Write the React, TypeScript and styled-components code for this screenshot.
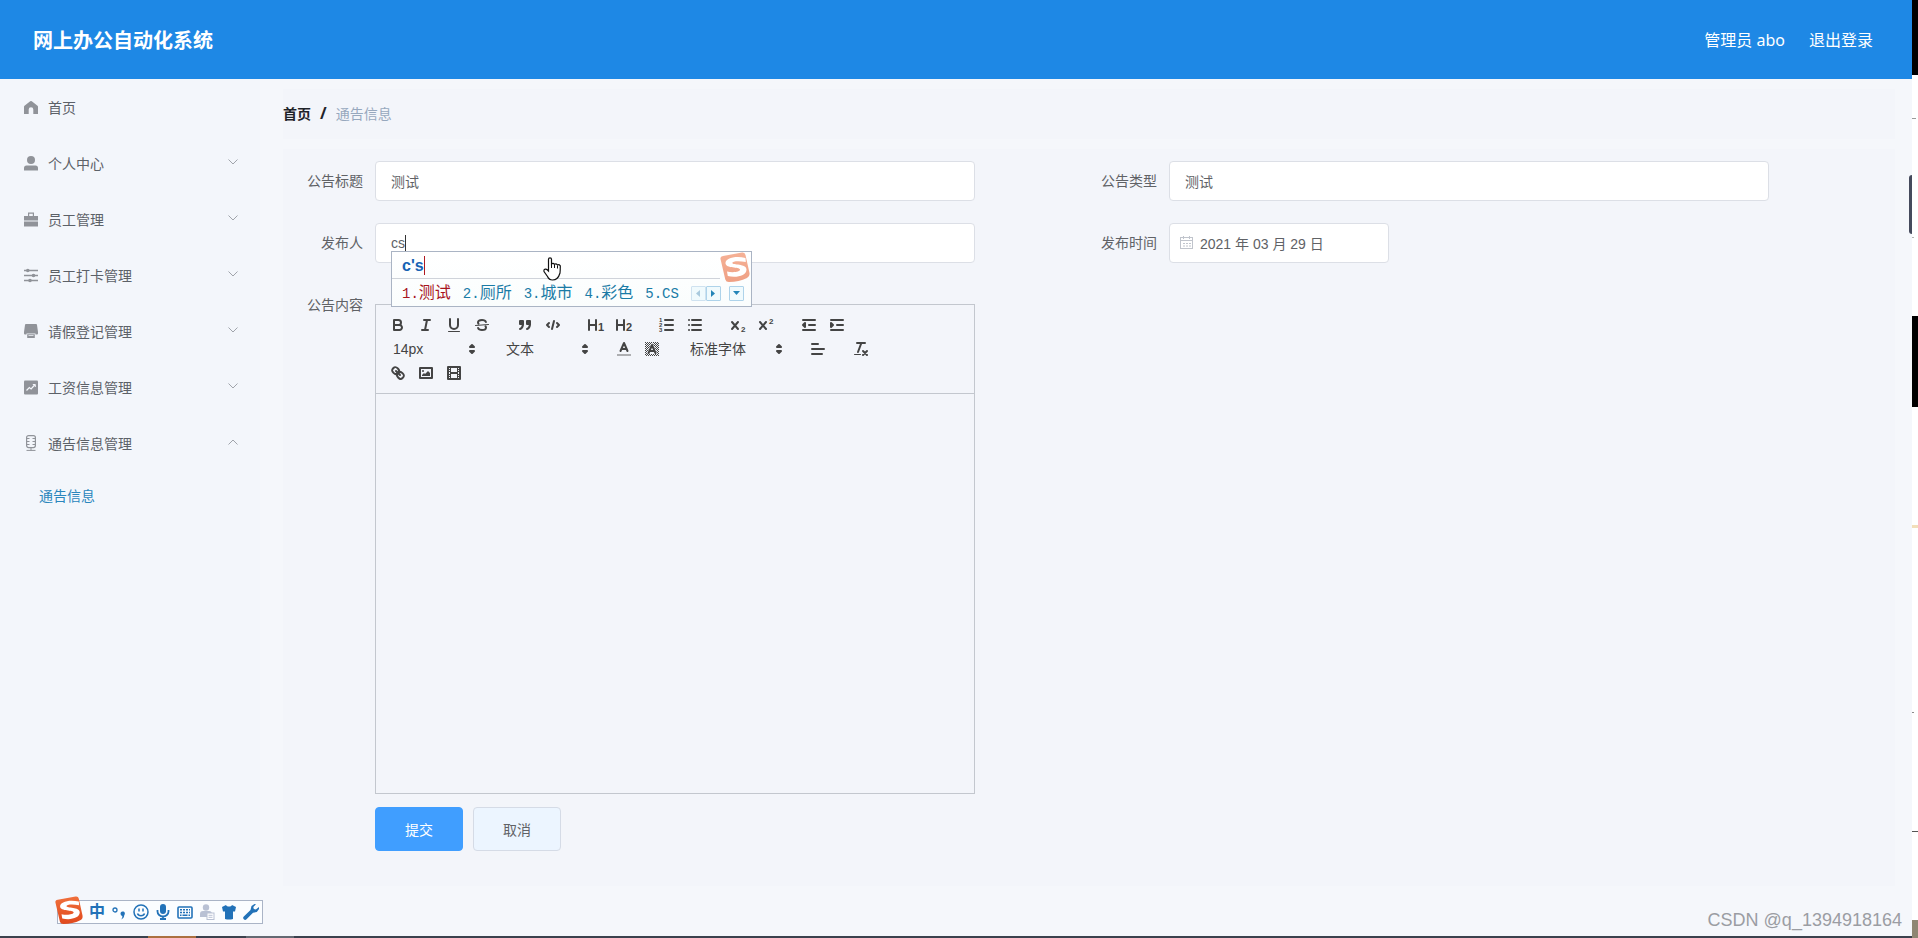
import React from "react";
import styled, { createGlobalStyle } from "styled-components";

const sans = '"Liberation Sans", "Noto Sans CJK SC", sans-serif';
const cjk = '"Noto Sans", "Noto Sans CJK SC", sans-serif';

const GlobalStyle = createGlobalStyle`
  *, *::before, *::after { box-sizing: border-box; }
  body { margin: 0; background: #fff; font-family: ${sans}; font-size: 14px; color: #606266; }
  button, input, select, textarea { font: inherit; color: inherit; margin: 0; }
  a { color: inherit; text-decoration: none; }
  svg { display: block; flex: none; }
`;

/* ---------- frame ---------- */

const Screen = styled.div`
  display: flex;
  min-height: 100vh;
  overflow: hidden;
`;

const Desktop = styled.div`
  position: relative;
  flex: 1;
  min-width: 0;
  display: flex;
  flex-direction: column;
  background: #f5f7fb;
`;

const EdgeStrip = styled.div`
  flex: none;
  width: 6px;
  display: flex;
  flex-direction: column;
`;

const EdgePiece = styled.div<{ $h: number; $color: string; $w?: number }>`
  flex: none;
  width: ${(p) => p.$w ?? 6}px;
  height: ${(p) => p.$h}px;
  background: ${(p) => p.$color};
`;

const EdgeRest = styled.div`
  flex: 1;
  background: #8f8672;
`;

const TaskBar = styled.div`
  display: flex;
  height: 2px;
  background: #3b414d;
`;

const TaskPiece = styled.div<{ $w: number; $color: string }>`
  width: ${(p) => p.$w}px;
  background: ${(p) => p.$color};
`;

const SideHandle = styled.div`
  position: absolute;
  right: 0;
  top: 175px;
  width: 3px;
  height: 59px;
  border-radius: 3px 0 0 3px;
  background: #454a5c;
`;

/* ---------- header ---------- */

const Header = styled.header`
  display: flex;
  align-items: center;
  justify-content: space-between;
  height: 79px;
  padding: 0 39px 0 33px;
  background: #1e88e5;
  color: #fff;
  font-family: ${cjk};
`;

const SystemTitle = styled.h1`
  margin: 0;
  padding-top: 2px;
  font-size: 20px;
  line-height: 28px;
  font-weight: 700;
`;

const UserArea = styled.div`
  display: flex;
  gap: 24px;
  font-size: 16px;
  line-height: 24px;
`;

/* ---------- side menu ---------- */

const Body = styled.div`
  flex: 1;
  display: flex;
`;

const SideMenu = styled.nav`
  flex: none;
  width: 260px;
  background: #f3f6fb;
`;

const MenuItem = styled.button`
  display: flex;
  align-items: center;
  width: 100%;
  height: 56px;
  padding: 0 21px 0 24px;
  border: 0;
  background: none;
  text-align: left;
  color: #5c6168;
`;

const MenuIcon = styled.svg`
  width: 14px;
  height: 16px;
  margin-right: 10px;
  color: #909399;
`;

const MenuText = styled.span`
  flex: 1;
`;

const Chevron = styled.svg`
  width: 12px;
  height: 12px;
  margin-bottom: 2px;
  color: #a0a4ab;
`;

const SubItem = styled.a`
  display: block;
  padding-left: 39px;
  line-height: 50px;
  color: #2a86bd;
`;

/* ---------- content ---------- */

const Main = styled.main`
  flex: 1;
  min-width: 0;
  padding: 10px 17px 50px 23px;
`;

const Breadcrumb = styled.nav`
  display: flex;
  align-items: center;
  height: 50px;
  margin-bottom: 10px;
  padding-bottom: 2px;
  background: #f3f5fa;
  color: #97a8be;
`;

const CrumbHome = styled.a`
  font-weight: 700;
  color: #1f2329;
`;

const CrumbSlash = styled.span`
  margin: 0 9px;
  font-family: ${cjk};
  font-size: 16px;
  font-weight: 700;
  line-height: 20px;
  color: #1f2329;
`;

const FormPanel = styled.form`
  padding: 12px 12px 35px;
  background: #f3f5fa;
`;

const FieldGrid = styled.div`
  display: grid;
  grid-template-columns: 1fr 1fr;
  row-gap: 22px;
`;

const Field = styled.div`
  display: flex;
`;

const Label = styled.label`
  flex: none;
  width: 80px;
  padding-right: 12px;
  line-height: 40px;
  text-align: right;
`;

const Control = styled.div<{ $max?: number }>`
  position: relative;
  flex: 1;
  max-width: ${(p) => p.$max ?? 600}px;
`;

const TextInput = styled.input<{ $icon?: boolean }>`
  display: block;
  width: 100%;
  height: 40px;
  padding: 0 15px 0 ${(p) => (p.$icon ? 30 : 15)}px;
  border: 1px solid #dcdfe6;
  border-radius: 4px;
  background: #fff;
  outline: none;
`;

const DateIcon = styled.svg`
  position: absolute;
  left: 11px;
  top: 13px;
  width: 14px;
  height: 14px;
  color: #c0c4cc;
`;

const Caret = styled.span<{ $color: string; $left: number; $top: number; $h: number }>`
  position: absolute;
  left: ${(p) => p.$left}px;
  top: ${(p) => p.$top}px;
  width: 1px;
  height: ${(p) => p.$h}px;
  background: ${(p) => p.$color};
`;

/* ---------- rich text editor ---------- */

const Editor = styled.div`
  flex: 1;
  max-width: 600px;
  margin-top: 19px;
  border: 1px solid #c3c7ce;
`;

const Toolbar = styled.div`
  padding: 8px;
  border-bottom: 1px solid #c3c7ce;
  color: #444;
`;

const ToolRow = styled.div`
  display: flex;
  gap: 15px;
  height: 24px;
`;

const ToolGroup = styled.div`
  display: flex;
`;

const ToolButton = styled.button`
  width: 28px;
  height: 24px;
  padding: 3px 5px;
  border: 0;
  background: none;
`;

const QuillSvg = styled.svg`
  width: 18px;
  height: 18px;
  fill: none;
  stroke: #444;
  stroke-width: 2;
  stroke-linecap: round;
  stroke-linejoin: round;

  .fill { fill: #444; stroke: none; }
  .both { fill: #444; }
  .thin { stroke-width: 1; }
  text { fill: #444; stroke: none; font-family: ${sans}; font-weight: 700; }
`;

const Picker = styled.div<{ $w: number }>`
  position: relative;
  width: ${(p) => p.$w}px;
  height: 24px;

  svg {
    position: absolute;
    right: 1px;
    top: 3px;
    pointer-events: none;
  }
`;

const PickerSelect = styled.select`
  appearance: none;
  width: 100%;
  height: 24px;
  padding: 0 0 0 9px;
  border: 0;
  background: none;
  line-height: 24px;
  color: #444;
`;

const EditorBody = styled.textarea`
  display: block;
  width: 100%;
  height: 399px;
  padding: 12px 15px;
  border: 0;
  background: none;
  resize: none;
  outline: none;
`;

const Actions = styled.div`
  display: flex;
  gap: 10px;
  padding: 13px 0 0 80px;
`;

const ActionButton = styled.button<{ $primary?: boolean }>`
  width: 88px;
  height: 44px;
  border: 1px solid ${(p) => (p.$primary ? "#409eff" : "#d5dbe6")};
  border-radius: 4px;
  background: ${(p) => (p.$primary ? "#409eff" : "#ecf5ff")};
  color: ${(p) => (p.$primary ? "#fff" : "#606266")};
`;

/* ---------- input method ---------- */

const ImePopup = styled.div`
  position: absolute;
  z-index: 2;
  left: 16px;
  top: 28px;
  width: 361px;
  height: 56px;
  border: 1px solid #aab4c4;
  background: linear-gradient(#fff, #fafdfd);
`;

const ImeTyped = styled.div`
  height: 27px;
  margin-right: 31px;
  padding-left: 10px;
  border-bottom: 1px solid #cfd3da;
  font-size: 16px;
  line-height: 28px;
  font-weight: 700;
  color: #1763b4;
`;

const ImeLogo = styled.svg`
  position: absolute;
  right: 0;
  top: 0;
  width: 32px;
  height: 31px;
`;

const ImeRow = styled.div`
  display: flex;
  align-items: center;
  height: 27px;
  padding: 1px 0 0 10px;
`;

const Candidates = styled.ol`
  display: flex;
  gap: 12px;
  margin: 0;
  padding: 0;
  list-style: none;
  font-size: 16px;
  line-height: 24px;
  color: #1a7ba6;
  white-space: nowrap;

  li:first-child { color: #a8141c; }
`;

const Mono = styled.span`
  font-family: "Liberation Mono", monospace;
  font-size: 14px;
`;

const Pager = styled.div`
  display: flex;
  margin-left: 12px;
`;

const PagerButton = styled.button<{ $gap?: boolean; $dim?: boolean }>`
  display: flex;
  align-items: center;
  justify-content: center;
  width: 15px;
  height: 15px;
  margin-left: ${(p) => (p.$gap ? 8 : 0)}px;
  padding: 0;
  border: 1px solid ${(p) => (p.$dim ? "#cfe2f0" : "#aed3ea")};
  border-radius: 1px;
  background: #f0fafd;
  color: ${(p) => (p.$dim ? "#a9c9dd" : "#2385b8")};
`;

const HandCursor = styled.svg`
  position: absolute;
  left: 151px;
  top: 5px;
  width: 20px;
  height: 25px;
`;

const ImeBar = styled.div`
  position: absolute;
  z-index: 3;
  left: 57px;
  bottom: 14px;
  display: flex;
  align-items: center;
  width: 206px;
  height: 24px;
  padding-left: 28px;
  border: 1px solid #aab4c6;
  background: #fbfdff;
`;

const ImeBarLogo = styled.svg`
  position: absolute;
  left: -4px;
  bottom: -2px;
  width: 30px;
  height: 29px;
`;

const ImeBarButton = styled.button`
  display: flex;
  align-items: center;
  justify-content: center;
  width: 22px;
  height: 22px;
  padding: 0;
  border: 0;
  background: none;
  font-size: 16px;
  line-height: 20px;
  font-weight: 700;
  color: #2272b8;
`;

const Watermark = styled.div`
  position: absolute;
  z-index: 3;
  right: 10px;
  bottom: 8px;
  font-size: 18px;
  line-height: 20px;
  color: #9b9da3;
`;

/* ---------- drawings ---------- */

const SogouMark = ({ from, to }: { from: string; to: string }) => {
  const id = "sg" + from.slice(1);
  return (
    <>
      <defs>
        <linearGradient id={id} x1="0" y1="0" x2="0" y2="1">
          <stop offset="0" stopColor={from} />
          <stop offset="1" stopColor={to} />
        </linearGradient>
      </defs>
      <path d="M1.500 7 Q1 4.500 4 4 L23 .500 Q26 0 26.500 3 L30.500 21 Q31 24.500 28 26 Q20 30 10 30 Q7 30 6.300 27.500Z" fill={`url(#${id})`} />
      <path
        d="M26.500 6 C16 3.500 6 6.500 6.500 11.500 C7 16.500 20.500 14.800 21 17.500 C21.200 20 14 20.800 8 19.600 L8.800 24 C17 26 27.500 24 27.500 17.500 C27.500 11.500 13.500 13.200 13.300 11 C13.200 9 20 8.600 26.800 10Z"
        fill="#fff"
      />
    </>
  );
};

const menuDrawings: Record<string, React.ReactNode> = {
  home: <path fill="currentColor" d="M6.200 2.200q.800-.600 1.600 0L13.500 6.800q.500.400.500 1V15H9.300V10.500a2.300 2.300 0 0 0-4.600 0V15H0V7.800q0-.600.500-1Z" />,
  user: (
    <g fill="currentColor">
      <circle cx="7" cy="5" r="4" />
      <path d="M0 15.500v-2.500A2.500 2.500 0 0 1 2.500 10.500h9a2.500 2.500 0 0 1 2.500 2.500v2.500Z" />
    </g>
  ),
  briefcase: (
    <g fill="currentColor">
      <path d="M4 1.500h6V5h4v4.500H0V5h4Zm1.200 1.200V5h3.600V2.700Z" fillRule="evenodd" />
      <path d="M0 10.500h14v5H0Z" />
    </g>
  ),
  sliders: (
    <g fill="none" stroke="currentColor" strokeWidth="1.300">
      <path d="M0 3.500h14M0 8.500h14M0 13.500h14" />
      <g fill="currentColor" stroke="none">
        <circle cx="3.800" cy="3.500" r="1.800" />
        <circle cx="9.500" cy="8.500" r="1.800" />
        <circle cx="6" cy="13.500" r="1.800" />
      </g>
    </g>
  ),
  printer: (
    <g fill="currentColor">
      <path d="M2 1h10a1 1 0 0 1 1 1l1 7v1.500a1 1 0 0 1-1 1h-1.500V10.500h-9v1H1a1 1 0 0 1-1-1V9l1-7a1 1 0 0 1 1-1Z" />
      <path d="M3.200 11.200h7.600V15H3.200Zm1.300 1V13h5v-.800Z" fillRule="evenodd" />
    </g>
  ),
  chart: (
    <>
      <rect x="0" y="1.500" width="14" height="14" rx="1" fill="currentColor" />
      <path d="m2.500 11.500 2.800-3 1.800 1.500 4-4.500" fill="none" stroke="#f3f6fb" strokeWidth="1.200" />
      <path d="M8.800 5.500h2.500V8" fill="none" stroke="#f3f6fb" />
    </>
  ),
  mic: (
    <g fill="none" stroke="currentColor" strokeWidth="1.200">
      <rect x="2.600" y=".600" width="8.800" height="12" rx="2" />
      <path d="M3 3.500h2.500M3 6.500h2.500M3 9.500h2.500M11 3.500H8.500M11 6.500H8.500M11 9.500H8.500M7 12.600V15.400M2.500 15.400h9" strokeWidth="1" />
    </g>
  ),
};

const tools: Record<string, React.ReactNode> = {
  加粗: (
    <>
      <path d="M5,4H9.500A2.500,2.500,0,0,1,12,6.500v0A2.500,2.500,0,0,1,9.500,9H5V4Z" />
      <path d="M5,9h5.500A2.500,2.500,0,0,1,13,11.500v0A2.500,2.500,0,0,1,10.500,14H5V9Z" />
    </>
  ),
  斜体: <path d="M7 4h6M5 14h6M8 14 10 4" />,
  下划线: (
    <>
      <path d="M5,3V9a4.012,4.012,0,0,0,4,4H9a4.012,4.012,0,0,0,4-4V3" />
      <rect className="fill" x="3" y="15" width="12" height="1" rx=".5" />
    </>
  ),
  删除线: (
    <>
      <path className="thin" d="M15.500 8.500 2.500 9.500" />
      <path d="M12.900 6C12.500 4.800 10.900 4 9 4 6.700 4 5 5.100 5 6.500c0 .600.200 1 .500 1.300M5.100 12C5.500 13.200 7.100 14 9 14c2.300 0 4-1.100 4-2.500 0-.600-.200-1-.500-1.300" />
    </>
  ),
  引用: (
    <>
      <rect className="both" x="4" y="5" width="3" height="3" />
      <rect className="both" x="11" y="5" width="3" height="3" />
      <path className="both" d="M7,8c0,4.031-3,5-3,5" />
      <path className="both" d="M14,8c0,4.031-3,5-3,5" />
    </>
  ),
  代码: (
    <>
      <path d="M5 7 3 9 5 11M13 7 15 9 13 11" />
      <path d="M10 5 8 13" />
    </>
  ),
  一级标题: (
    <>
      <path d="M2 4V14M9 4V14M2 9H9" />
      <text x="11" y="15" fontSize="11">1</text>
    </>
  ),
  二级标题: (
    <>
      <path d="M2 4V14M9 4V14M2 9H9" />
      <text x="11" y="15" fontSize="11">2</text>
    </>
  ),
  有序列表: (
    <>
      <path d="M7 4H15M7 9H15M7 14H15" />
      <text x="1" y="6" fontSize="6">1</text>
      <text x="1" y="11" fontSize="6">2</text>
      <text x="1" y="16" fontSize="6">3</text>
    </>
  ),
  无序列表: <path d="M6 4H15M6 9H15M6 14H15M3 4h.01M3 9h.01M3 14h.01" />,
  下标: (
    <>
      <path d="M3 6 9 13M9 6 3 13" />
      <text x="12" y="16" fontSize="8">2</text>
    </>
  ),
  上标: (
    <>
      <path d="M3 6 9 13M9 6 3 13" />
      <text x="12" y="8" fontSize="8">2</text>
    </>
  ),
  减少缩进: (
    <>
      <path d="M3 14H15M3 4H15M9 9H15" />
      <path className="both" d="M5 7V11L3 9Z" />
    </>
  ),
  增加缩进: (
    <>
      <path d="M3 14H15M3 4H15M9 9H15" />
      <path className="both" d="M3 7V11L5 9Z" />
    </>
  ),
  字体颜色: (
    <>
      <path d="M3 15H15" opacity=".4" strokeLinecap="square" />
      <path d="M5.500 11 9 3 12.500 11M6.380 9H11.630" />
    </>
  ),
  背景颜色: (
    <>
      <defs>
        <pattern id="dither" width="2" height="2" patternUnits="userSpaceOnUse">
          <path d="M0 0h1v1H0ZM1 1h1v1H1Z" fill="#444" stroke="none" />
        </pattern>
      </defs>
      <rect x="2" y="2" width="14" height="14" fill="url(#dither)" stroke="none" />
      <path d="M9 4 5 13h8Z" fill="#f3f5fa" stroke="#f3f5fa" />
      <path d="M5.500 13 9 5 12.500 13M6.380 11H11.630" />
    </>
  ),
  对齐方式: <path d="M3 9H15M3 14H13M3 4H9" />,
  清除格式: (
    <>
      <path d="M5 3H13M6 12 9.350 3M11 11 15 15M15 11 11 15" />
      <rect className="fill" x="2" y="14" width="7" height="1" rx=".5" />
    </>
  ),
  插入链接: (
    <>
      <path d="M7 7 11 11" />
      <path d="M8.900,4.577a3.476,3.476,0,0,1,.360,4.679A3.476,3.476,0,0,1,4.577,8.900C3.185,7.500,2.035,6.400,4.217,4.217S7.500,3.185,8.900,4.577Z" />
      <path d="M13.423,9.100a3.476,3.476,0,0,0-4.679-.360,3.476,3.476,0,0,0,.360,4.679c1.392,1.392,2.500,2.542,4.679.360S14.815,10.500,13.423,9.100Z" />
    </>
  ),
  插入图片: (
    <>
      <rect x="3" y="4" width="12" height="10" />
      <circle className="fill" cx="6" cy="7" r="1" />
      <path className="fill" d="M5 12V11L7 9 8 10 11 7 13 9V12Z" />
    </>
  ),
  插入视频: (
    <>
      <rect x="3" y="3" width="12" height="12" />
      <rect className="fill" x="5" y="3" width="1" height="12" />
      <rect className="fill" x="12" y="3" width="1" height="12" />
      <rect className="fill" x="5" y="8" width="8" height="2" />
      <path d="M3 5.500h3M3 7.500h3M3 10.500h3M3 12.500h3M12 5.500h3M12 7.500h3M12 10.500h3M12 12.500h3" strokeWidth="1" strokeLinecap="butt" />
    </>
  ),
};

const Tools = ({ names }: { names: string[] }) => (
  <ToolGroup>
    {names.map((n) => (
      <ToolButton key={n} type="button" aria-label={n}>
        <QuillSvg viewBox="0 0 18 18">{tools[n]}</QuillSvg>
      </ToolButton>
    ))}
  </ToolGroup>
);

const ToolPicker = ({ label, value, width }: { label: string; value: string; width: number }) => (
  <Picker $w={width}>
    <PickerSelect aria-label={label} defaultValue={value}>
      <option>{value}</option>
    </PickerSelect>
    <QuillSvg viewBox="0 0 18 18">
      <path className="both" d="M7 11 9 13 11 11ZM7 7 9 5 11 7Z" />
    </QuillSvg>
  </Picker>
);

const menu = [
  { text: "首页", icon: "home" },
  { text: "个人中心", icon: "user", open: false },
  { text: "员工管理", icon: "briefcase", open: false },
  { text: "员工打卡管理", icon: "sliders", open: false },
  { text: "请假登记管理", icon: "printer", open: false },
  { text: "工资信息管理", icon: "chart", open: false },
  { text: "通告信息管理", icon: "mic", open: true },
];

const candidates = [
  ["1.", "测试"],
  ["2.", "厕所"],
  ["3.", "城市"],
  ["4.", "彩色"],
  ["5.CS", ""],
];

const edgePieces: [number, string, number?][] = [
  [75, "#000"],
  [43, "#fff"],
  [1, "#9a9a9a", 4],
  [118, "#fff"],
  [1, "#b5b5b5", 2],
  [78, "#fff"],
  [91, "#000"],
  [118, "#fff"],
  [3, "#f2dfba"],
  [184, "#fff"],
  [1, "#8a8a8a", 2],
  [118, "#fff"],
  [1, "#555"],
  [88, "#fff"],
];

const imeTools: [string, React.ReactNode][] = [
  [
    "标点",
    <svg width="16" height="16" viewBox="0 0 16 16" key="p">
      <circle cx="4" cy="6" r="2" fill="none" stroke="currentColor" strokeWidth="1.300" />
      <path d="M9.500 9.500a2.200 2.200 0 1 1 3.800 1.600C13 13.500 12 15 10 15.500c1-1 1.500-2 1.300-3.500Q9.500 11.500 9.500 9.500Z" fill="currentColor" />
    </svg>,
  ],
  [
    "表情",
    <svg width="16" height="16" viewBox="0 0 16 16" key="s" fill="none" stroke="currentColor" strokeWidth="1.500">
      <circle cx="8" cy="8" r="7" />
      <path d="M6 4.500v3M10 4.500v3M4.500 9.500c1 3 6 3 7 0" />
    </svg>,
  ],
  [
    "语音",
    <svg width="16" height="16" viewBox="0 0 16 16" key="m">
      <rect x="5" y="0" width="6" height="10" rx="3" fill="currentColor" />
      <path d="M2.500 6v1.500a5.500 5 0 0 0 11 0V6M8 12v3M5 15h6" fill="none" stroke="currentColor" strokeWidth="1.800" />
    </svg>,
  ],
  [
    "键盘",
    <svg width="16" height="16" viewBox="0 0 16 16" key="k">
      <rect x="1" y="3" width="14" height="11" rx="1" fill="none" stroke="currentColor" strokeWidth="1.600" />
      <path d="M3 5.800h10M3 8.500h10" stroke="currentColor" strokeWidth="1.500" strokeDasharray="2 1" />
      <path d="M3 11.300h1.500M5.500 11.300h5M11.500 11.300H13" stroke="currentColor" strokeWidth="1.500" />
    </svg>,
  ],
  [
    "用户",
    <svg width="16" height="16" viewBox="0 0 16 16" key="u">
      <g fill="#b9c1d4">
        <circle cx="7" cy="3.500" r="3.200" />
        <path d="M1 13V10a3 3 0 0 1 3-3h6a3 3 0 0 1 3 2v4Z" />
      </g>
      <rect x="8" y="9" width="7" height="6.500" fill="#fff" stroke="#b9c1d4" />
      <path d="M9.500 11.300h4M9.500 13.300h4" stroke="#b9c1d4" />
    </svg>,
  ],
  [
    "皮肤",
    <svg width="16" height="16" viewBox="0 0 16 16" key="t">
      <path d="M5 1c1 2 5 2 6 0l4 2-1 4.500h-2V15q-4 1-8 0V7.500H2L1 3Z" fill="currentColor" />
    </svg>,
  ],
  [
    "工具",
    <svg width="16" height="16" viewBox="0 0 16 16" key="w">
      <path d="M11.500 0 8.500 2 7.500 6 0.800 12.500a1.800 1.800 0 0 0 2.700 2.700L10 8.800l3.800-.800L16 5V3l-3.200 2.500-2-.600L10.300 3 13 .300Z" fill="currentColor" />
    </svg>,
  ],
];

export default function App() {
  return (
    <Screen>
      <GlobalStyle />
      <Desktop>
        <Header>
          <SystemTitle>网上办公自动化系统</SystemTitle>
          <UserArea>
            <span>管理员 abo</span>
            <a href="#logout">退出登录</a>
          </UserArea>
        </Header>

        <Body>
          <SideMenu aria-label="主菜单">
            {menu.map((m) => (
              <MenuItem key={m.text} type="button" aria-expanded={m.open}>
                <MenuIcon viewBox="0 0 14 16">{menuDrawings[m.icon]}</MenuIcon>
                <MenuText>{m.text}</MenuText>
                {m.open !== undefined && (
                  <Chevron viewBox="0 0 12 12" fill="none" stroke="currentColor">
                    <path d={m.open ? "M1.500 8.500 6 4 10.500 8.500" : "M1.500 3.500 6 8 10.500 3.500"} />
                  </Chevron>
                )}
              </MenuItem>
            ))}
            <SubItem href="#notice">通告信息</SubItem>
          </SideMenu>

          <Main>
            <Breadcrumb aria-label="面包屑">
              <CrumbHome href="#home">首页</CrumbHome>
              <CrumbSlash>/</CrumbSlash>
              <span>通告信息</span>
            </Breadcrumb>

            <FormPanel onSubmit={(e) => e.preventDefault()}>
              <FieldGrid>
                <Field>
                  <Label htmlFor="title">公告标题</Label>
                  <Control>
                    <TextInput id="title" defaultValue="测试" />
                  </Control>
                </Field>
                <Field>
                  <Label htmlFor="kind">公告类型</Label>
                  <Control>
                    <TextInput id="kind" defaultValue="测试" />
                  </Control>
                </Field>
                <Field>
                  <Label htmlFor="author">发布人</Label>
                  <Control>
                    <TextInput id="author" defaultValue="cs" />
                    <Caret $color="#333" $left={30} $top={12} $h={16} />
                    <ImePopup>
                      <ImeTyped>c's</ImeTyped>
                      <Caret $color="#b01820" $left={32} $top={4} $h={19} />
                      <ImeRow>
                        <Candidates>
                          {candidates.map(([n, word]) => (
                            <li key={n}>
                              <Mono>{n}</Mono>
                              {word}
                            </li>
                          ))}
                        </Candidates>
                        <Pager>
                          <PagerButton type="button" aria-label="上一页" $dim>
                            <svg width="4" height="7" viewBox="0 0 4 7"><path d="M4 0v7L0 3.500Z" fill="currentColor" /></svg>
                          </PagerButton>
                          <PagerButton type="button" aria-label="下一页">
                            <svg width="4" height="7" viewBox="0 0 4 7"><path d="M0 0v7l4-3.500Z" fill="currentColor" /></svg>
                          </PagerButton>
                          <PagerButton type="button" aria-label="更多" $gap>
                            <svg width="7" height="4" viewBox="0 0 7 4"><path d="M0 0h7L3.500 4Z" fill="currentColor" /></svg>
                          </PagerButton>
                        </Pager>
                      </ImeRow>
                      <ImeLogo viewBox="0 0 32 31">
                        <SogouMark from="#f5b196" to="#efa084" />
                      </ImeLogo>
                      <HandCursor viewBox="0 0 20 25">
                        <path
                          d="M5.500 14V2.300a1.500 1.500 0 0 1 3 0V7q1.500-1.500 3 .300 1.700-1 3 .700 1.500-.800 2.800.800 0 4.500-.300 7.200Q15 23 9.500 23 6 23 4.500 19.500L1 14.500q-.500-2.500 1.800-2.300Q4 12.400 5.500 14Z"
                          fill="#fff"
                          stroke="#111"
                          strokeWidth="1.200"
                        />
                        <path d="M8.500 7v4M11.500 7.500v3.500M14.500 8.500v3" stroke="#111" strokeWidth="1" />
                      </HandCursor>
                    </ImePopup>
                  </Control>
                </Field>
                <Field>
                  <Label htmlFor="date">发布时间</Label>
                  <Control $max={220}>
                    <TextInput id="date" $icon defaultValue="2021 年 03 月 29 日" />
                    <DateIcon viewBox="0 0 14 14" fill="none" stroke="currentColor">
                      <rect x=".5" y="1.500" width="12" height="11" />
                      <path d="M.5 4.500h12M3.500 0v3M9.500 0v3M3 7.500h2M6 7.500h2M9 7.500h2M3 10h2M6 10h2M9 10h2" />
                    </DateIcon>
                  </Control>
                </Field>
                <Field>
                  <Label htmlFor="content">公告内容</Label>
                  <Editor>
                    <Toolbar role="toolbar" aria-label="格式">
                      <ToolRow>
                        <Tools names={["加粗", "斜体", "下划线", "删除线"]} />
                        <Tools names={["引用", "代码"]} />
                        <Tools names={["一级标题", "二级标题"]} />
                        <Tools names={["有序列表", "无序列表"]} />
                        <Tools names={["下标", "上标"]} />
                        <Tools names={["减少缩进", "增加缩进"]} />
                      </ToolRow>
                      <ToolRow>
                        <ToolPicker label="字号" value="14px" width={98} />
                        <ToolPicker label="标题" value="文本" width={98} />
                        <Tools names={["字体颜色", "背景颜色"]} />
                        <ToolPicker label="字体" value="标准字体" width={108} />
                        <Tools names={["对齐方式"]} />
                        <Tools names={["清除格式"]} />
                      </ToolRow>
                      <ToolRow>
                        <Tools names={["插入链接", "插入图片", "插入视频"]} />
                      </ToolRow>
                    </Toolbar>
                    <EditorBody id="content" />
                  </Editor>
                </Field>
              </FieldGrid>
              <Actions>
                <ActionButton type="submit" $primary>提交</ActionButton>
                <ActionButton type="button">取消</ActionButton>
              </Actions>
            </FormPanel>
          </Main>
        </Body>

        <TaskBar>
          <TaskPiece $w={148} $color="#3b414d" />
          <TaskPiece $w={48} $color="#ab7040" />
          <TaskPiece $w={50} $color="#3b414d" />
          <TaskPiece $w={48} $color="#646972" />
        </TaskBar>
        <SideHandle />
        <ImeBar>
          <ImeBarLogo viewBox="0 0 32 31">
            <SogouMark from="#f0703c" to="#e0481c" />
          </ImeBarLogo>
          <ImeBarButton type="button">中</ImeBarButton>
          {imeTools.map(([name, icon]) => (
            <ImeBarButton key={name} type="button" aria-label={name}>
              {icon}
            </ImeBarButton>
          ))}
        </ImeBar>
        <Watermark>CSDN @q_1394918164</Watermark>
      </Desktop>
      <EdgeStrip>
        {edgePieces.map(([h, color, w], i) => (
          <EdgePiece key={i} $h={h} $color={color} $w={w} />
        ))}
        <EdgeRest />
      </EdgeStrip>
    </Screen>
  );
}
